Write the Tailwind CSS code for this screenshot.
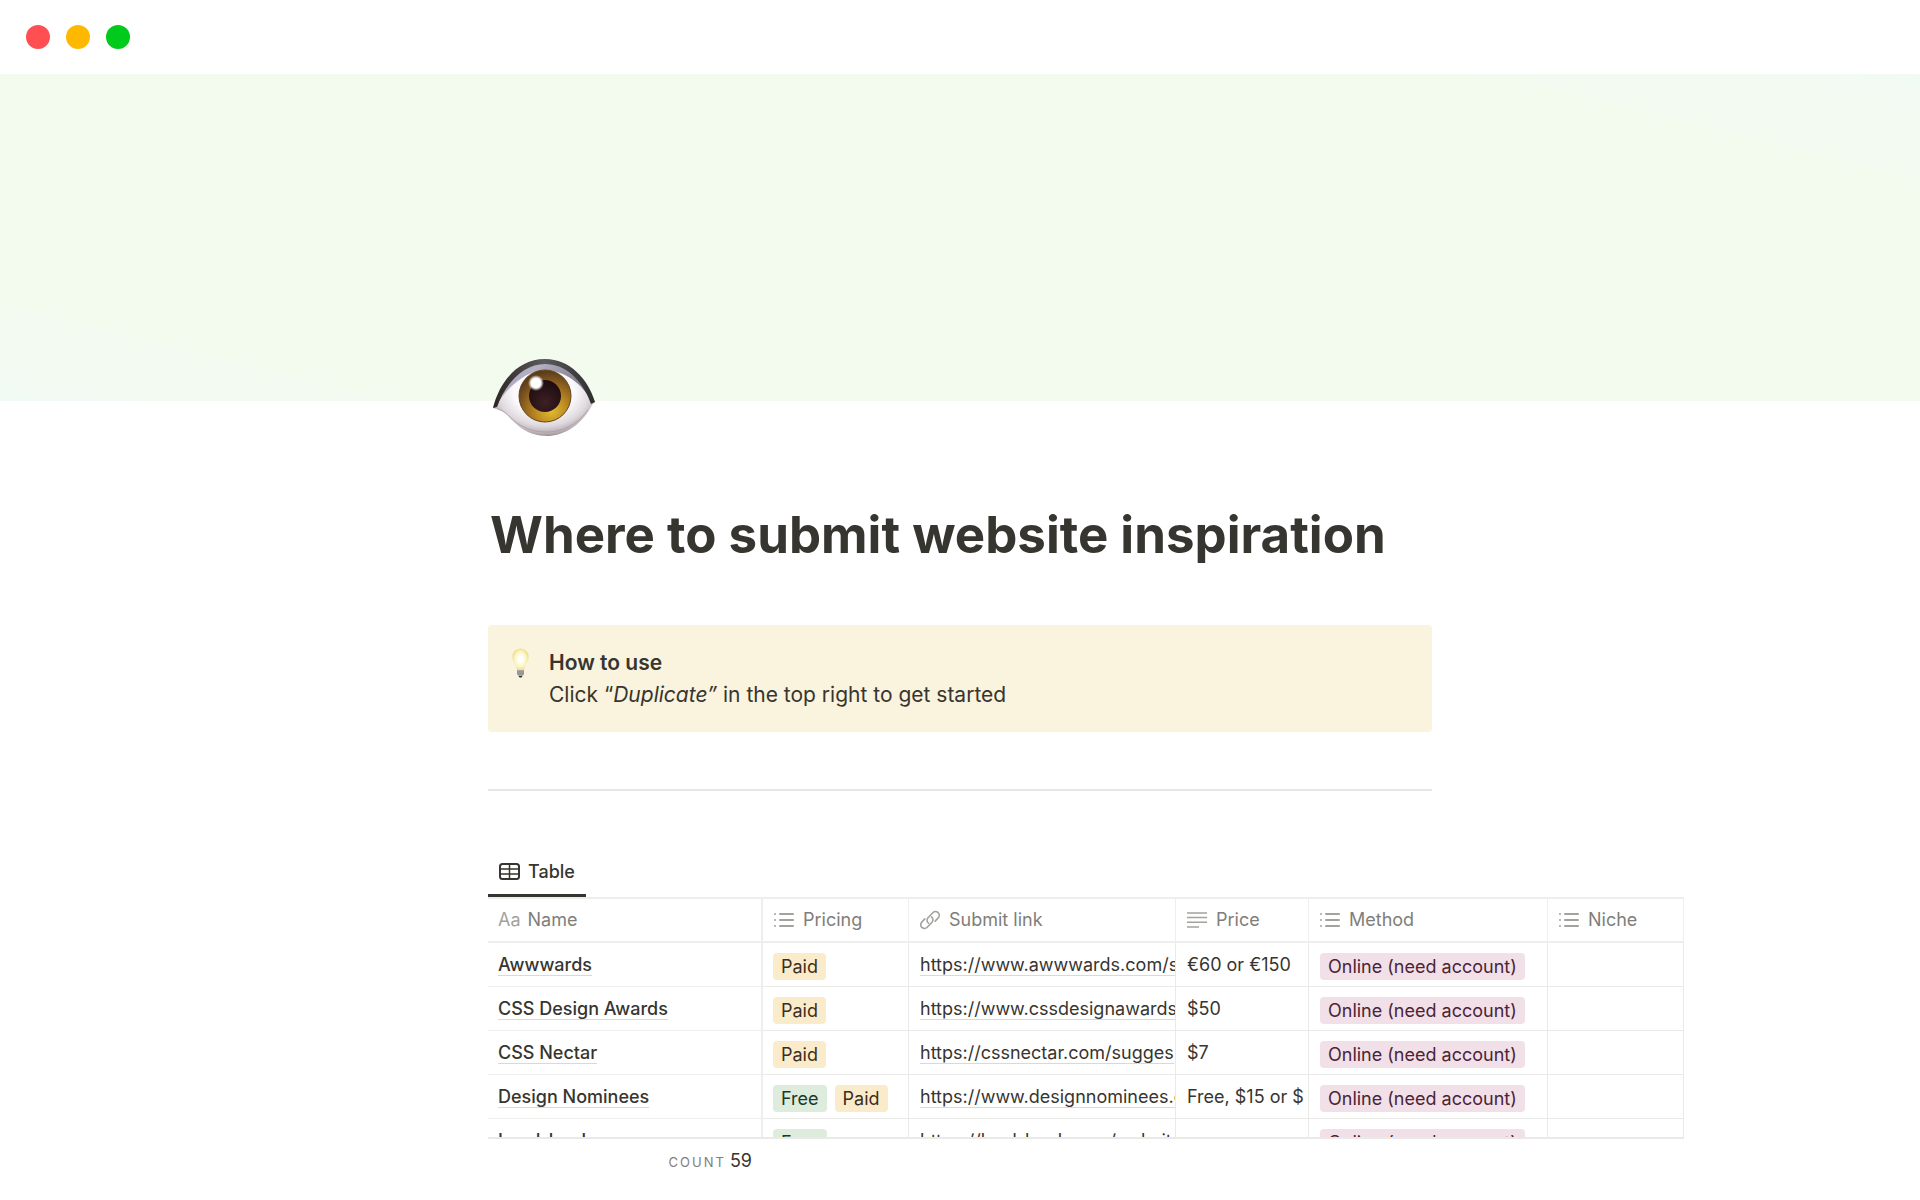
<!DOCTYPE html>
<html lang="en">

<head>
    <meta charset="UTF-8" />
    <meta name="viewport" content="width=device-width, initial-scale=1.0" />
    <title>Where to submit website inspiration</title>
    <script src="https://cdn.jsdelivr.net/npm/@tailwindcss/browser@4"></script>
</head>

<body class="bg-white text-[#37352f] font-['Inter','Liberation_Sans',sans-serif]">
    <!-- shared icons -->
    <svg class="hidden">
        <symbol id="list" viewBox="0 0 20 16">
            <g fill="#a3a29e">
                <rect x="0" y="1" width="2" height="2" rx="1" />
                <rect x="0" y="7" width="2" height="2" rx="1" />
                <rect x="0" y="13" width="2" height="2" rx="1" />
                <rect x="5" y="1" width="15" height="2" rx="1" />
                <rect x="5" y="7" width="15" height="2" rx="1" />
                <rect x="5" y="13" width="15" height="2" rx="1" />
            </g>
        </symbol>
    </svg>

    <div class="h-screen flex flex-col">
        <div class="h-[74px] shrink-0 flex items-center gap-4 px-[26px]">
            <span class="size-6 rounded-full bg-[#ff4f52]"></span>
            <span class="size-6 rounded-full bg-[#ffb800]"></span>
            <span class="size-6 rounded-full bg-[#00ca1b]"></span>
        </div>

        <div class="h-[327px] shrink-0 bg-[linear-gradient(14deg,#f0fbf3,#f3faf3_3%,#f3faf2_11%,#f3faee_13%,#f3faee_86%,#f3faf2_88%,#f3faf3_97%,#f0fbf3)]"></div>

        <main class="w-full max-w-[944px] mx-auto flex flex-col flex-1 min-h-0">
            <svg class="w-[104px] h-20 ml-1 -mt-[43px] shrink-0 relative" viewBox="0 0 104 80" role="img" aria-label="Eye">
                <defs>
                    <radialGradient id="white" cx="50%" cy="42%" r="60%">
                        <stop offset="0.5" stop-color="#fbf9fb" />
                        <stop offset="0.75" stop-color="#dfd9dd" />
                        <stop offset="0.92" stop-color="#b5aab0" />
                        <stop offset="1" stop-color="#85777c" />
                    </radialGradient>
                    <linearGradient id="lid" x1="0" y1="0" x2="1" y2="0">
                        <stop offset="0" stop-color="#2b2621" />
                        <stop offset="0.5" stop-color="#5b5b5c" />
                        <stop offset="1" stop-color="#2c2d2f" />
                    </linearGradient>
                    <linearGradient id="crease" x1="0" y1="0" x2="1" y2="0.4">
                        <stop offset="0" stop-color="#9a98ab" />
                        <stop offset="0.4" stop-color="#b4b2c5" />
                        <stop offset="1" stop-color="#77757d" />
                    </linearGradient>
                    <radialGradient id="iris" cx="62%" cy="78%" r="75%">
                        <stop offset="0" stop-color="#e2bd31" />
                        <stop offset="0.45" stop-color="#b5831f" />
                        <stop offset="0.8" stop-color="#7d5420" />
                        <stop offset="1" stop-color="#5b3d1b" />
                    </radialGradient>
                    <radialGradient id="pupil" cx="50%" cy="70%" r="65%">
                        <stop offset="0" stop-color="#3d2024" />
                        <stop offset="1" stop-color="#1e0d10" />
                    </radialGradient>
                    <radialGradient id="glint">
                        <stop offset="0.6" stop-color="#fff" />
                        <stop offset="1" stop-color="#fff" stop-opacity="0" />
                    </radialGradient>
                </defs>
                <path d="M1 50C8 22 27 1 53 1c25 0 43 20 50 43-2 1-3 3-4 5C88 69 70 78 55 78 36 78 25 68 15 57 10 53 6 51 1 50z" fill="url(#white)" />
                <path d="M5 51c4 0 8 3 12 7 10 10 21 16 38 16 16 0 31-8 41-22" fill="none" stroke="#a0959b" stroke-width="1" opacity=".6" />
                <path d="M3 49C9 26 28 5 53 5c24 0 41 18 47 39C90 25 73 13 53 12 34 13 16 28 3 49z" fill="url(#crease)" />
                <path d="M1 50C8 22 27 1 53 1c25 0 43 20 50 43l-4 2C90 20 72 6 53 6 31 6 13 26 5 49z" fill="url(#lid)" />
                <circle cx="53" cy="38" r="26" fill="url(#iris)" stroke="#66461f" />
                <circle cx="53" cy="38" r="16" fill="url(#pupil)" />
                <circle cx="44" cy="25" r="8" fill="url(#glint)" />
            </svg>

            <h1 class="mt-[63px] ml-[2px] text-[51px] leading-[68px] font-bold whitespace-nowrap shrink-0">Where to submit website inspiration</h1>

            <section class="mt-14 shrink-0 flex bg-[#faf3dd] rounded px-6 pt-[22px] pb-[21px]">
                <svg class="w-[17px] h-[30px] mt-px mr-5" viewBox="0 0 17 30" role="img" aria-label="Light bulb">
                    <defs>
                        <radialGradient id="bulb">
                            <stop offset="0.3" stop-color="#fffef8" />
                            <stop offset="0.75" stop-color="#fbf3bd" />
                            <stop offset="1" stop-color="#f0dc8c" />
                        </radialGradient>
                    </defs>
                    <path d="M8.500 0.500a8 8 0 0 1 8 8.500c0 5-4 7-4.500 13H5C4.500 16 .5 14 .5 9a8 8 0 0 1 8-8.500z" fill="url(#bulb)" />
                    <path d="M5 22h7v4l-1.500 2h-4L5 26z" fill="#aaa9a8" />
                    <path d="M5 24h7M5 26h7" stroke="#75787a" stroke-width="0.700" />
                    <path d="M6.500 28h4l-1 1.500h-2z" fill="#333" />
                </svg>
                <div class="text-[21px] leading-8">
                    <p class="font-semibold">How to use</p>
                    <p>Click “<em>Duplicate”</em> in the top right to get started</p>
                </div>
            </section>

            <hr class="mt-[57px] shrink-0 border-t-2 border-[#e6e6e4]" />

            <div class="mt-[61px] shrink-0 flex" role="tablist">
                <button type="button" role="tab" aria-selected="true" class="h-[45px] flex items-center gap-2 px-[11px] pb-1 border-b-3 border-[#37352f] text-[18px] font-medium">
                    <svg class="w-[21px] h-[17px]" viewBox="0 0 21 17" fill="none" stroke="#37352f" stroke-width="1.500">
                        <rect x="1" y="1" width="19" height="15" rx="2.500" stroke-width="2" />
                        <path d="M1 6h19M1 11h19M10.500 1v15" />
                    </svg>
                    Table
                </button>
            </div>

            <div class="w-[1196px] flex-1 min-h-0 overflow-hidden border-b-2 border-[#e9e9e7]">
                <table class="w-full table-fixed border-separate border-spacing-0 text-[18px] leading-6 text-left whitespace-nowrap">
                    <colgroup>
                        <col class="w-[275px]" />
                        <col class="w-[146px]" />
                        <col class="w-[267px]" />
                        <col class="w-[133px]" />
                        <col class="w-[239px]" />
                        <col class="w-[136px]" />
                    </colgroup>
                    <thead class="text-[#7f7e7a]">
                        <tr class="h-[46px]">
                            <th class="border-y-2 border-r-2 border-[#eeeeed] pl-[10px] font-normal">
                                <div class="flex gap-[7px]"><span class="text-[#a3a29e]">Aa</span>Name</div>
                            </th>
                            <th class="border-y-2 border-r border-[#eeeeed] pl-[11px] font-normal">
                                <div class="flex items-center gap-[9px]"><svg class="w-5 h-4"><use href="#list" /></svg>Pricing</div>
                            </th>
                            <th class="border-y-2 border-r border-[#eeeeed] pl-[11px] font-normal">
                                <div class="flex items-center gap-[9px]">
                                    <svg class="size-5" viewBox="0 0 20 20" fill="none" stroke="#a3a29e" stroke-width="1.600" stroke-linecap="round">
                                        <path d="M8.500 13.200A3.800 3.800 0 0 1 8 7.700l4.800-5a3.700 3.700 0 0 1 5.400 5.200l-3 3.200" />
                                        <path d="M11.500 6.800a3.800 3.800 0 0 1 .5 5.500l-4.800 5a3.700 3.700 0 0 1-5.400-5.200l3-3.200" />
                                    </svg>
                                    Submit link
                                </div>
                            </th>
                            <th class="border-y-2 border-r border-[#eeeeed] pl-[11px] font-normal">
                                <div class="flex items-center gap-[9px]">
                                    <svg class="w-5 h-4" viewBox="0 0 20 16" fill="none" stroke="#a3a29e" stroke-width="1.500">
                                        <path d="M0 1h20M0 5.600h20M0 10.300h20M0 15h12" />
                                    </svg>
                                    Price
                                </div>
                            </th>
                            <th class="border-y-2 border-r border-[#eeeeed] pl-[11px] font-normal">
                                <div class="flex items-center gap-[9px]"><svg class="w-5 h-4"><use href="#list" /></svg>Method</div>
                            </th>
                            <th class="border-y-2 border-r border-[#eeeeed] pl-[11px] font-normal">
                                <div class="flex items-center gap-[9px]"><svg class="w-5 h-4"><use href="#list" /></svg>Niche</div>
                            </th>
                        </tr>
                    </thead>
                    <tbody id="rows"></tbody>
                </table>
            </div>

            <div class="h-[61px] shrink-0 w-[275px] pr-[11px] pt-2 flex items-baseline justify-end gap-1 leading-7">
                <span class="text-[13px] tracking-[2px] text-[#7f7e7a]">COUNT</span>
                <span class="text-[18px]">59</span>
            </div>
        </main>
    </div>

    <script>
        const sites = [
            { name: 'Awwwards', pricing: ['Paid'], link: 'https://www.awwwards.com/s', price: '€60 or €150' },
            { name: 'CSS Design Awards', pricing: ['Paid'], link: 'https://www.cssdesignawards', price: '$50' },
            { name: 'CSS Nectar', pricing: ['Paid'], link: 'https://cssnectar.com/sugges', price: '$7' },
            { name: 'Design Nominees', pricing: ['Free', 'Paid'], link: 'https://www.designnominees.c', price: 'Free, $15 or $' },
            { name: 'Land-book', pricing: ['Free'], link: 'https://land-book.com/websit', price: '' },
        ];

        const colors = {
            Paid: 'bg-[#faeccb] text-[#402c1b]',
            Free: 'bg-[#ddecdc] text-[#1c3829]',
        };

        const tag = (text, color) => `<span class="h-[27px] px-2 rounded flex items-center ${color}">${text}</span>`;

        document.getElementById('rows').innerHTML = sites.map((site) => `
            <tr class="h-11">
                <td class="border-b border-r-2 border-[#eeeeed] pl-[10px] font-medium"><a href="#" class="border-b border-[#d9d9d7]">${site.name}</a></td>
                <td class="border-b border-r border-[#e9e9e7] pl-[10px] pt-1"><div class="flex gap-2">${site.pricing.map((p) => tag(p, colors[p])).join('')}</div></td>
                <td class="border-b border-r border-[#e9e9e7] pl-[11px] overflow-hidden"><a href="${site.link}" class="border-b border-[#d9d9d7]">${site.link}</a></td>
                <td class="border-b border-r border-[#e9e9e7] pl-[11px] overflow-hidden">${site.price}</td>
                <td class="border-b border-r border-[#e9e9e7] pl-[11px] pt-1"><div class="flex">${tag('Online (need account)', 'bg-[#f1e0e8] text-[#4c2337]')}</div></td>
                <td class="border-b border-r border-[#e9e9e7]"></td>
            </tr>`).join('');
    </script>
</body>

</html>
